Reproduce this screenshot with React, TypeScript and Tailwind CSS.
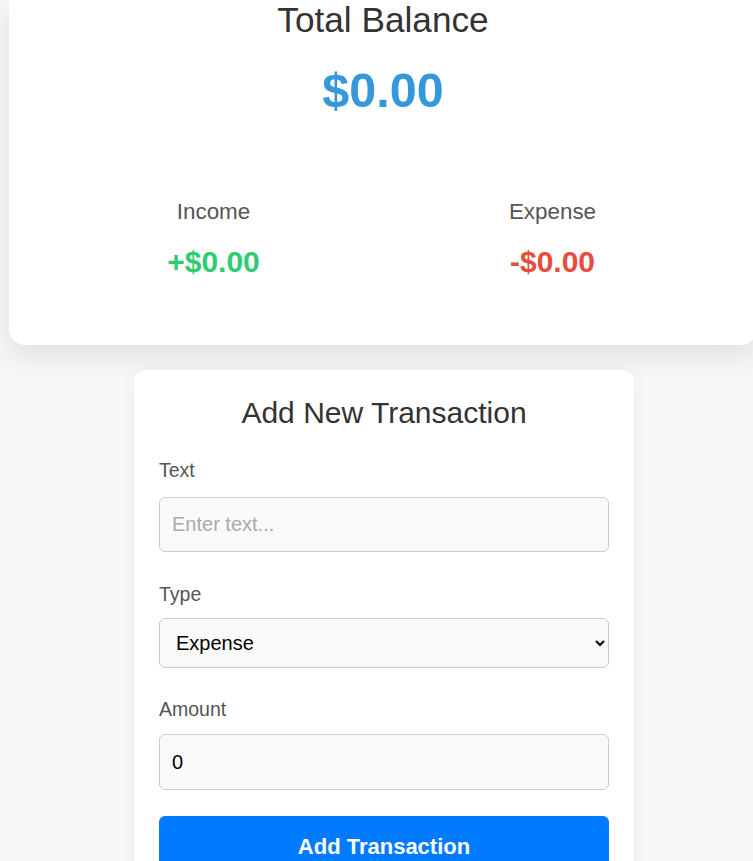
import React, { useState } from 'react';

const font = { fontFamily: '"Liberation Sans", Arial, sans-serif' };

const App: React.FC = () => {
  const [text, setText] = useState('');
  const [type, setType] = useState<'income' | 'expense'>('expense');
  const [amount, setAmount] = useState('0');

  return (
    <div className="min-h-screen bg-[#f7f7f7] overflow-hidden" style={font}>
      {/* Balance summary card */}
      <div className="ml-[9px] w-[748px] bg-white rounded-b-[16px] shadow-[0_10px_30px_rgba(0,0,0,0.1)] pb-[66px] text-center">
        <h1 className="text-[35.2px] leading-[40px] text-[#333] font-normal">Total Balance</h1>
        <div className="mt-[22px] text-[48.5px] leading-[56px] font-bold text-[#3498db]">$0.00</div>

        <div className="mt-[81px] px-[35px] flex">
          <div className="flex-1">
            <h3 className="text-[22.4px] leading-[26px] text-[#555]">Income</h3>
            <p className="mt-[20px] text-[30px] leading-[34px] font-bold text-[#2ecc71]">+$0.00</p>
          </div>
          <div className="flex-1">
            <h3 className="text-[22.4px] leading-[26px] text-[#555]">Expense</h3>
            <p className="mt-[20px] text-[30px] leading-[34px] font-bold text-[#e74c3c]">-$0.00</p>
          </div>
        </div>
      </div>

      {/* Add transaction form */}
      <div className="mt-[25px] w-[500px] bg-white rounded-[12px] shadow-[0_4px_15px_rgba(0,0,0,0.06)] px-[25px] pt-[25px] pb-[25px] ml-[134px]">
        <h2 className="text-center text-[30px] leading-[36px] text-[#333]">Add New Transaction</h2>

        <form onSubmit={(e) => e.preventDefault()} className="mt-[28px]">
          <label className="block text-[19.5px] leading-[22px] text-[#555]">Text</label>
          <input
            type="text"
            value={text}
            onChange={(e) => setText(e.target.value)}
            placeholder="Enter text..."
            className="mt-[16px] block w-full h-[55px] px-[12px] text-[20px] border border-[#ccc] rounded-[6px] bg-[#f9f9f9] text-black placeholder:text-[#aaa] outline-none"
          />

          <label className="mt-[31px] block text-[19.5px] leading-[22px] text-[#555]">Type</label>
          <select
            value={type}
            onChange={(e) => setType(e.target.value as 'income' | 'expense')}
            className="mt-[13px] block w-full h-[50px] px-[12px] text-[20px] border border-[#ccc] rounded-[6px] bg-[#f9f9f9] text-black outline-none"
          >
            <option value="income">Income</option>
            <option value="expense">Expense</option>
          </select>

          <label className="mt-[30px] block text-[19.5px] leading-[22px] text-[#555]">Amount</label>
          <input
            type="number"
            value={amount}
            onChange={(e) => setAmount(e.target.value)}
            className="mt-[14px] block w-full h-[56px] px-[12px] text-[20px] border border-[#ccc] rounded-[6px] bg-[#f9f9f9] text-black outline-none"
          />

          <button
            type="submit"
            className="mt-[26px] block w-full pt-[18px] pb-[15px] text-[22px] leading-[25px] font-bold text-white bg-[#007bff] rounded-[6px]"
          >
            Add Transaction
          </button>
        </form>
      </div>
    </div>
  );
};

export default App;
